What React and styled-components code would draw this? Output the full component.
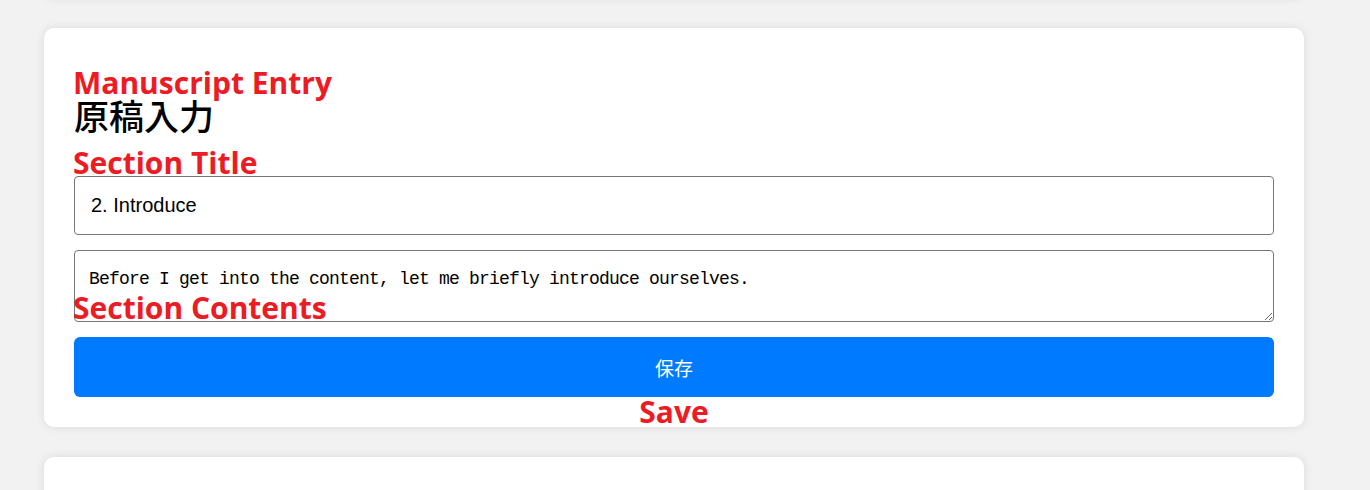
import React from 'react';
import styled, { createGlobalStyle } from 'styled-components';

const GlobalStyle = createGlobalStyle`
  html, body {
    margin: 0;
    padding: 0;
    background: #f2f2f2;
    overflow: hidden;
  }
  body {
    font-family: "Liberation Sans", "Noto Sans CJK JP", sans-serif;
    color: #000;
  }
`;

const Page = styled.div`
  display: flex;
  flex-direction: column;
  gap: 30px;
  width: 1260px;
  margin: -102px 0 0 44px;
`;

const Card = styled.section`
  position: relative;
  background: #fff;
  border-radius: 10px;
  box-shadow: 0 0 10px rgba(0, 0, 0, 0.1);
  padding: 30px;
  min-height: ${p => p.minHeight || 0}px;
  box-sizing: border-box;
`;

const Heading = styled.h1`
  margin: 37px 0 41px;
  font-family: "Noto Sans CJK JP", sans-serif;
  font-size: 35px;
  font-weight: 500;
  line-height: 40px;
`;

const Form = styled.div`
  display: flex;
  flex-direction: column;
  gap: 15px;
`;

const TitleInput = styled.input`
  box-sizing: border-box;
  width: 100%;
  height: 59px;
  padding: 0 16px;
  border: 1px solid #767676;
  border-radius: 4px;
  font-family: "Liberation Sans", Arial, sans-serif;
  font-size: 20px;
  color: #000;
  outline: none;
`;

const ContentArea = styled.textarea`
  box-sizing: border-box;
  width: 100%;
  height: 72px;
  padding: 18px 14px 14px;
  border: 1px solid #767676;
  border-radius: 4px;
  font-family: "Liberation Mono", monospace;
  font-size: 18px;
  letter-spacing: -0.8px;
  color: #000;
  outline: none;
  display: block;
`;

const SaveButton = styled.button`
  height: 60px;
  width: 100%;
  border: none;
  border-radius: 6px;
  background: #007bff;
  color: #fff;
  font-family: "Noto Sans CJK JP", sans-serif;
  font-size: 19px;
  cursor: pointer;
`;

// red notes laid over the screenshot
const Note = styled.span`
  position: absolute;
  top: ${p => p.top}px;
  left: ${p => (p.center ? 0 : p.left)}px;
  right: ${p => (p.center ? '0' : 'auto')};
  text-align: ${p => (p.center ? 'center' : 'left')};
  font-family: "Open Sans", sans-serif;
  font-weight: 700;
  font-size: 30px;
  line-height: 30px;
  color: #ed1c24;
  pointer-events: none;
  white-space: nowrap;
`;

export default function App() {
  return (
    <>
      <GlobalStyle />
      <Page>
        <Card minHeight={100} />
        <Card>
          <Heading>原稿入力</Heading>
          <Form>
            <TitleInput defaultValue="2. Introduce" />
            <ContentArea defaultValue="Before I get into the content, let me briefly introduce ourselves." />
            <SaveButton>保存</SaveButton>
          </Form>
          <Note top={40} left={29}>Manuscript Entry</Note>
          <Note top={120} left={29}>Section Title</Note>
          <Note top={265} left={29}>Section Contents</Note>
          <Note top={369} center>Save</Note>
        </Card>
        <Card minHeight={200} />
      </Page>
    </>
  );
}
